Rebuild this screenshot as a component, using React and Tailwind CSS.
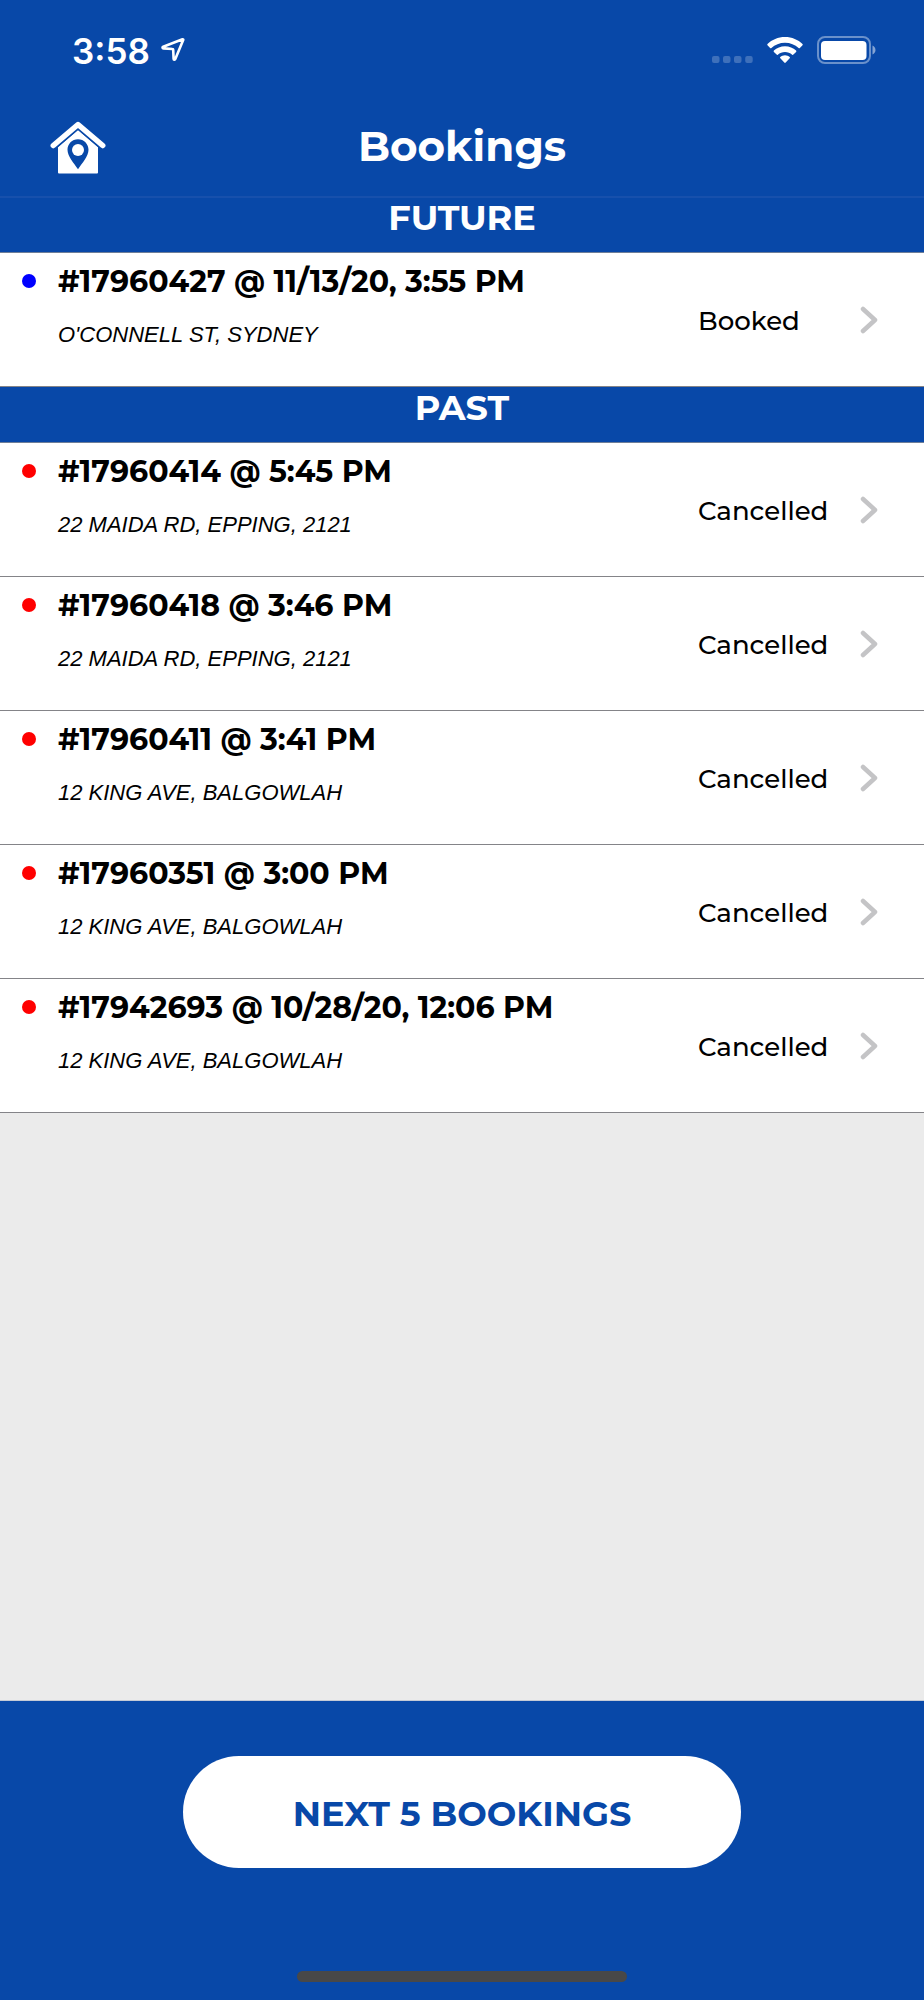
import React from "react";

const futureBookings = [
  { id: "17960427", time: "11/13/20, 3:55 PM", address: "O'CONNELL ST, SYDNEY", status: "Booked" },
];

const pastBookings = [
  { id: "17960414", time: "5:45 PM", address: "22 MAIDA RD, EPPING, 2121", status: "Cancelled" },
  { id: "17960418", time: "3:46 PM", address: "22 MAIDA RD, EPPING, 2121", status: "Cancelled" },
  { id: "17960411", time: "3:41 PM", address: "12 KING AVE, BALGOWLAH", status: "Cancelled" },
  { id: "17960351", time: "3:00 PM", address: "12 KING AVE, BALGOWLAH", status: "Cancelled" },
  { id: "17942693", time: "10/28/20, 12:06 PM", address: "12 KING AVE, BALGOWLAH", status: "Cancelled" },
];

function StatusBar() {
  return (
    <div className="flex h-[100px] items-center justify-between pl-[72px] pr-[47px]">
      <div className="flex items-center gap-[11px]">
        <span className="pt-px font-['Inter'] text-[35px] font-semibold leading-[40px]">3:58</span>
        {/* Location arrow */}
        <svg width="24" height="26" viewBox="0 0 24 26" fill="none">
          <path
            d="M21.5 2.3 2.2 9.7c-1 .4-.8 1.6.3 1.7l8.900.6c.5 0 .8.3.8.8l.4 9c.1 1.100 1.300 1.300 1.700.3L22.200 3c.2-.5-.2-.9-.7-.7Z"
            stroke="white"
            strokeWidth="2.6"
            strokeLinejoin="round"
          />
        </svg>
      </div>
      <div className="flex items-center">
        {/* No signal */}
        <svg width="42" height="28" viewBox="0 0 42 28" fill="white" fillOpacity="0.22">
          <rect x="0" y="20" width="7.5" height="7" rx="2" />
          <rect x="11" y="20" width="7.5" height="7" rx="2" />
          <rect x="22" y="20" width="7.5" height="7" rx="2" />
          <rect x="33.2" y="20" width="7.5" height="7" rx="2" />
        </svg>
        {/* Wifi */}
        <svg className="ml-[13px]" width="36" height="28" viewBox="0 0 36 28" fill="white">
          <path d="M18 1C11 1 4.900 3.700.5 8c-.4.4-.4.900 0 1.300l2.600 2.700c.4.400.9.400 1.300 0C8 8.700 12.700 6.700 18 6.700s10 2 13.600 5.300c.4.400.9.400 1.300 0l2.600-2.700c.4-.4.400-.9 0-1.300C31.100 3.700 25 1 18 1Z" />
          <path d="M18 10.200c-4.300 0-8.200 1.700-11.100 4.400-.4.400-.4.900 0 1.300l2.700 2.700c.4.400.8.400 1.200.1 2-1.700 4.500-2.700 7.200-2.700s5.200 1 7.200 2.700c.4.300.8.300 1.200-.1l2.700-2.700c.4-.4.400-.9 0-1.300-2.900-2.700-6.800-4.400-11.100-4.400Z" />
          <path d="M18 19.300c-1.800 0-3.400.7-4.700 1.700-.4.300-.4.800 0 1.200l4 4.400c.4.500 1 .5 1.400 0l4-4.400c.4-.4.400-.9 0-1.200-1.300-1-2.900-1.700-4.700-1.700Z" />
        </svg>
        {/* Battery */}
        <svg className="ml-[14px]" width="60" height="28" viewBox="0 0 60 28" fill="none">
          <rect x="1" y="1" width="52" height="26" rx="7" stroke="white" strokeOpacity="0.4" strokeWidth="2" />
          <rect x="4" y="5" width="45.500" height="19" rx="4" fill="white" />
          <path d="M55.500 9.500c1.700.7 3 2.400 3 4.500s-1.300 3.800-3 4.500Z" fill="white" fillOpacity="0.5" />
        </svg>
      </div>
    </div>
  );
}

function HomeIcon() {
  return (
    <svg width="56" height="54" viewBox="0 0 56 54">
      <path d="M8 26 28 9l20 17v25.500a1 1 0 0 1-1 1H9a1 1 0 0 1-1-1Z" fill="white" />
      <path
        d="M3 24.600 28 3.200l25 21.400"
        fill="none"
        stroke="#0848a8"
        strokeWidth="9"
        strokeLinejoin="round"
      />
      <path
        d="M3.300 24.500 28 3.500l24.700 21"
        fill="none"
        stroke="white"
        strokeWidth="5.500"
        strokeLinecap="round"
        strokeLinejoin="round"
      />
      <path d="M28 18.300c-5.900 0-10.500 4.700-10.500 10.500 0 7 6.500 13.200 10.500 19.500 4-6.300 10.500-12.500 10.500-19.500 0-5.800-4.600-10.500-10.500-10.500Z" fill="#0848a8" />
      <circle cx="28" cy="29" r="6" fill="white" />
    </svg>
  );
}

function BookingRow({ booking }) {
  const dotColor = booking.status === "Booked" ? "bg-[#0000ff]" : "bg-[#ff0000]";

  return (
    <li className="border-b border-[#848488] bg-white">
      <a href={`#${booking.id}`} className="flex h-[133px] text-black">
        <span className={`ml-[22px] mt-[21px] size-[14px] shrink-0 rounded-full ${dotColor}`} />
        <div className="ml-[22px] flex-1 pt-[9px]">
          <h3 className="text-[30px] font-bold leading-[40px]">
            #{booking.id} @ {booking.time}
          </h3>
          <p className="mt-[15px] font-['Liberation_Sans'] text-[22px] italic leading-[36px]">{booking.address}</p>
        </div>
        <div className="flex w-[226px] shrink-0 items-center justify-between pr-[46px]">
          <span className="pt-[2px] text-[26px] font-medium leading-[32px]">{booking.status}</span>
          <svg width="18" height="28" viewBox="0 0 18 28" fill="none">
            <path
              d="M3 3l12 11L3 25"
              stroke="#c4c4c6"
              strokeWidth="4.500"
              strokeLinecap="round"
              strokeLinejoin="round"
            />
          </svg>
        </div>
      </a>
    </li>
  );
}

function BookingSection({ title, bookings }) {
  return (
    <section>
      <h2 className="h-14 border-b border-[#6f7f98] bg-[#0848a8] pt-px text-center text-[35px] font-bold leading-[40px] text-white">
        {title}
      </h2>
      <ul>
        {bookings.map((booking) => (
          <BookingRow key={booking.id} booking={booking} />
        ))}
      </ul>
    </section>
  );
}

export default function App() {
  return (
    <div className="flex min-h-screen flex-col bg-[#ebebeb] font-['Montserrat','Inter',sans-serif]">
      <header className="relative border-b border-[#1750ac] bg-[#0848a8] text-white shadow-[0_1px_0_#1750ac]">
        <StatusBar />
        <div className="grid h-24 grid-cols-[1fr_auto_1fr] items-center">
          <button type="button" aria-label="Home" className="ml-[50px] w-14 cursor-pointer">
            <HomeIcon />
          </button>
          <h1 className="pb-1 text-[42px] font-bold leading-[56px]">Bookings</h1>
        </div>
      </header>

      <main className="flex-1">
        <BookingSection title="FUTURE" bookings={futureBookings} />
        <BookingSection title="PAST" bookings={pastBookings} />
      </main>

      <footer className="flex flex-col items-center border-t border-[#c4cad6] bg-[#0848a8] px-[183px] pb-[18px] pt-[55px]">
        <button
          type="button"
          className="h-28 w-full cursor-pointer rounded-full bg-white pt-1 text-[35px] font-bold text-[#0848a8]"
        >
          NEXT 5 BOOKINGS
        </button>
        {/* Home indicator */}
        <div className="mt-[103px] h-[11px] w-[59%] rounded-full bg-[#484848]" />
      </footer>
    </div>
  );
}
